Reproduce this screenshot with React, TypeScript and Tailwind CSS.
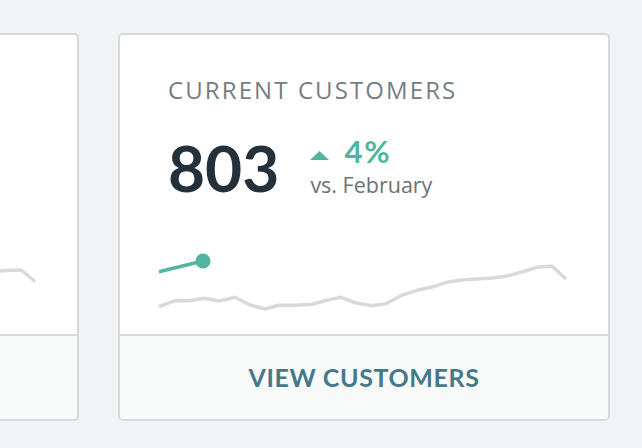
import React from 'react'

type Point = [number, number]

// sparkline coords are in the chart's own box (488 x 70)
const trendRight: Point[] = [
  [39, 57.7], [55, 51.7], [69, 51.7], [84, 49.3], [99, 52], [115, 48.3], [130, 56],
  [145, 60], [159, 56.3], [177, 56.3], [192, 55.3], [207, 51.3], [221, 48.3], [236, 54],
  [252, 56.7], [266, 54.7], [281, 46.7], [297, 41.3], [312, 38], [327, 33.3], [342, 31],
  [357, 30], [372, 29], [387, 27], [402, 23], [417, 18.3], [432, 17.3], [446, 30]
]

const trendLeft: Point[] = [
  [39, 50], [55, 46], [69, 48], [84, 44], [99, 47], [115, 42], [130, 49],
  [145, 52], [159, 50], [177, 47], [192, 49], [207, 45], [221, 41], [236, 44],
  [252, 47], [266, 43], [281, 38], [297, 35], [312, 33], [327, 30], [342, 29],
  [357, 28], [372, 27], [387, 25], [402, 23], [417, 21.5], [432, 21], [446, 32.5]
]

const toPoints = (pts: Point[]) => pts.map(([x, y]) => `${x},${y}`).join(' ')

const Sparkline: React.FC<{ data: Point[]; current: [Point, Point] }> = ({ data, current }) => (
  <svg width="488" height="70" viewBox="0 0 488 70" className="block">
    <polyline
      points={toPoints(data)}
      fill="none"
      stroke="#d7d9db"
      strokeWidth="3.5"
      strokeLinejoin="round"
    />
    <line
      x1={current[0][0]}
      y1={current[0][1]}
      x2={current[1][0]}
      y2={current[1][1]}
      stroke="#52b5a0"
      strokeWidth="3.5"
    />
    <circle cx={current[1][0]} cy={current[1][1]} r="7.5" fill="#52b5a0" />
  </svg>
)

const StatCard: React.FC<{
  label: string
  value: string
  change: string
  period: string
  action: string
  data: Point[]
  current: [Point, Point]
}> = ({ label, value, change, period, action, data, current }) => (
  <div className="w-[492px] shrink-0 rounded-[5px] border-2 border-[#d5dadd] bg-white overflow-hidden">
    <div className="h-[299px] pt-[41px] pl-[48px]">
      <p className="font-['Open_Sans',sans-serif] text-[24px] leading-[1.2] tracking-[2.1px] text-[#767d82] uppercase">
        {label}
      </p>
      <div className="mt-[31px] flex items-start">
        <span className="text-[64px] leading-none font-bold text-[#25313a]">{value}</span>
        <div className="ml-[31px]">
          <div className="flex items-end">
            <svg width="19" height="9" viewBox="0 0 19 9" className="mb-[7px]">
              <polygon points="9.5,0 19,9 0,9" fill="#52b5a0" />
            </svg>
            <span className="ml-[15px] text-[31px] leading-none font-bold tracking-[2px] text-[#52b5a0]">{change}</span>
          </div>
          <p className="mt-[5px] font-['Open_Sans',sans-serif] text-[21.5px] leading-[1.2] text-[#6c7378]">{period}</p>
        </div>
      </div>
      <div className="-ml-[48px] mt-[49px]">
        <Sparkline data={data} current={current} />
      </div>
    </div>
    <div className="h-[85px] border-t-2 border-[#d5dadd] bg-[#f8f9f9] flex items-center justify-center">
      <span className="text-[25px] font-bold tracking-[0.6px] text-[#44798a] uppercase">{action}</span>
    </div>
  </div>
)

const App: React.FC = () => {
  return (
    <div
      className="min-h-screen bg-[#f2f3f5] overflow-hidden"
      style={{ fontFamily: 'Lato, "Open Sans", sans-serif' }}
    >
      <div className="flex gap-[39px] pt-[33px] -ml-[413px]">
        <StatCard
          label="Monthly revenue"
          value="$24k"
          change="6%"
          period="vs. February"
          action="View revenue"
          data={trendLeft}
          current={[[39, 20], [83, 10]]}
        />
        <StatCard
          label="Current customers"
          value="803"
          change="4%"
          period="vs. February"
          action="View customers"
          data={trendRight}
          current={[[39, 22.7], [83, 12]]}
        />
      </div>
    </div>
  )
}

export default App
